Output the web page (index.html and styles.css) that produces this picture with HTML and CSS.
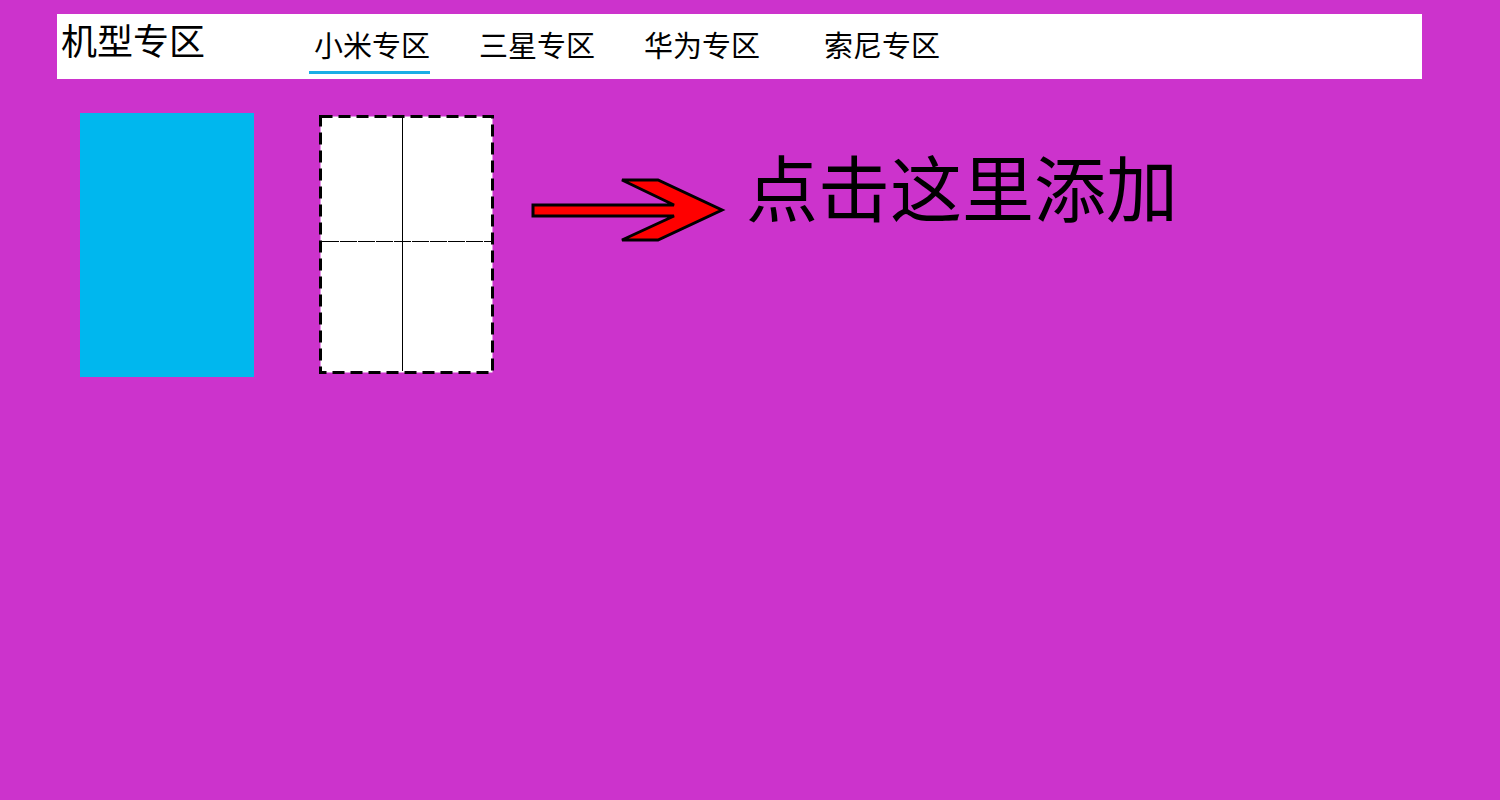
FILE: index.html
```html
<!DOCTYPE html>
<html lang="zh-CN">
<head>
<meta charset="utf-8">
<title>机型专区</title>
<link rel="stylesheet" href="styles.css">
</head>
<body>
<header class="topbar">
  <div class="title">机型专区</div>
  <nav class="nav">
    <a class="nav-item active">小米专区</a>
    <a class="nav-item">三星专区</a>
    <a class="nav-item">华为专区</a>
    <a class="nav-item last">索尼专区</a>
  </nav>
</header>
<main class="content">
  <div class="card-blue"></div>
  <svg class="card-add" width="175" height="259" viewBox="0 0 175 259">
    <rect x="1.5" y="1.5" width="172" height="256" fill="#fff" stroke="#000" stroke-width="3" stroke-dasharray="12 6"/>
    <line x1="83.5" y1="3" x2="83.5" y2="256" stroke="#000" stroke-width="1"/>
    <line x1="3" y1="126.5" x2="172" y2="126.5" stroke="#000" stroke-width="1" stroke-dasharray="17 1"/>
  </svg>
  <svg class="arrow" width="196" height="66" viewBox="0 0 196 66">
    <polygon points="3,28 144,28 92,3 128,3 192,33 128,63 92,63 144,39 3,39" fill="#ff0000" stroke="#000" stroke-width="3" stroke-linejoin="miter"/>
  </svg>
  <div class="add-text">点击这里添加</div>
</main>
</body>
</html>
```
FILE: styles.css
```css
html, body {
  margin: 0;
  padding: 0;
}
body {
  width: 1500px;
  height: 800px;
  background: #cc33cc;
  font-family: "Noto Sans CJK SC", "Noto Sans CJK JP", sans-serif;
  color: #000;
  overflow: hidden;
}
.topbar {
  margin: 14px 0 0 57px;
  width: 1365px;
  height: 65px;
  background: #fff;
  display: flex;
  align-items: flex-start;
  box-sizing: border-box;
  padding-left: 4px;
}
.title {
  font-size: 36px;
  line-height: 36px;
  margin-top: 7px;
}
.nav {
  display: flex;
  gap: 44px;
  margin-left: 104px;
  margin-top: 16px;
}
.nav-item {
  font-size: 29px;
  line-height: 29px;
  padding: 0 0 12px 5px;
  border-bottom: 3px solid transparent;
  cursor: pointer;
}
.nav-item.active {
  border-bottom-color: #1aaee6;
}
.nav-item.last {
  margin-left: 15px;
}
.content {
  display: flex;
  align-items: flex-start;
  margin-top: 34px;
  padding-left: 80px;
}
.card-blue {
  width: 174px;
  height: 264px;
  background: #00b7ee;
}
.card-add {
  display: block;
  margin-left: 65px;
  margin-top: 2px;
}
.arrow {
  display: block;
  margin-left: 36px;
  margin-top: 64px;
}
.add-text {
  font-size: 72px;
  line-height: 72px;
  margin-left: 20px;
  margin-top: 36px;
  white-space: nowrap;
}
```
